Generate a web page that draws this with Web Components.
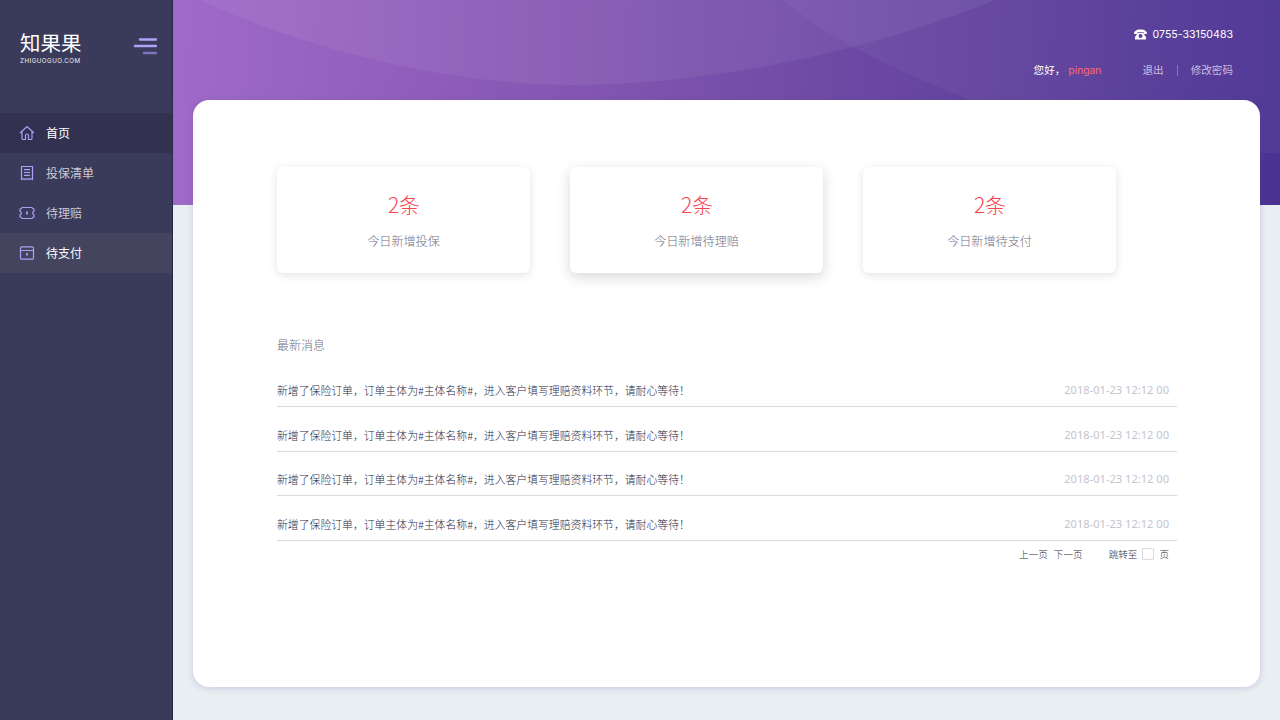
<!DOCTYPE html>
<html lang="zh">
<head>
<meta charset="utf-8">
<title>知果果</title>
<style>
html, body { margin: 0; height: 100%; background: #e9eef2; }
body { font-family: "Noto Sans CJK SC", "Inter", sans-serif; overflow: hidden; }
app-shell { height: 720px; }
</style>
</head>
<body>
<app-shell>
  <side-bar slot="side">
    <nav-item icon="home" active>首页</nav-item>
    <nav-item icon="list">投保清单</nav-item>
    <nav-item icon="ticket">待理赔</nav-item>
    <nav-item icon="box" hover>待支付</nav-item>
  </side-bar>
  <top-banner slot="top"></top-banner>
  <main-panel slot="panel">
    <stat-row>
      <stat-card value="2条">今日新增投保</stat-card>
      <stat-card value="2条" raised>今日新增待理赔</stat-card>
      <stat-card value="2条">今日新增待支付</stat-card>
    </stat-row>
    <message-list>
      <message-row>新增了保险订单，订单主体为#主体名称#，进入客户填写理赔资料环节，请耐心等待！</message-row>
      <message-row>新增了保险订单，订单主体为#主体名称#，进入客户填写理赔资料环节，请耐心等待！</message-row>
      <message-row>新增了保险订单，订单主体为#主体名称#，进入客户填写理赔资料环节，请耐心等待！</message-row>
      <message-row>新增了保险订单，订单主体为#主体名称#，进入客户填写理赔资料环节，请耐心等待！</message-row>
    </message-list>
    <pager-bar></pager-bar>
  </main-panel>
</app-shell>

<script>
const CJK = '"Noto Sans CJK SC", "Inter", sans-serif';

const ICONS = {
  home: '<path d="M1 8 8 1.500 15 8M3 6.500v6.700c0 .8.500 1.300 1.300 1.300h2.200V10.500c0-.8.700-1.500 1.500-1.500s1.500.7 1.500 1.500v4h2.200c.8 0 1.300-.5 1.300-1.300V6.500"/>',
  list: '<path d="M2.500 1.500h11v13l-1.400-.9-1.400.9-1.400-.9-1.300.9-1.400-.9-1.400.9-1.300-.9-1.400.9zM5 4.700h6M5 7.500h6M5 10.300h6"/>',
  ticket: '<path d="M3 2.500h10c.2 1 1 1.600 2 1.700v1.900c-.9.3-1.300 1.100-1.300 1.900s.4 1.600 1.300 1.900v1.900c-1 .1-1.800.7-2 1.700H3c-.2-1-1-1.600-2-1.700V9.900c.9-.3 1.300-1.100 1.300-1.900S1.900 6.400 1 6.100V4.200c1-.1 1.800-.7 2-1.700z"/><path d="M8 6.500v3" stroke-width="1.800"/>',
  box: '<path d="M2.800 1.800h10.400c.7 0 1.300.6 1.300 1.300v9.800c0 .7-.6 1.300-1.300 1.300H2.800c-.7 0-1.300-.6-1.300-1.300V3.100c0-.7.6-1.300 1.300-1.300zM1.500 5.500h13"/><path d="M8 8v2.500" stroke-width="1.800"/>'
};

class AppShell extends HTMLElement {
  constructor() {
    super();
    this.attachShadow({ mode: 'open' });
    this.shadowRoot.innerHTML = `
    <style>
      :host { display: flex; width: 1280px; background: #e9eef2; }
      .main { flex: 1; min-width: 0; display: flex; flex-direction: column; }
      .panel-wrap { margin: -105px 20px 0; position: relative; }
    </style>
    <slot name="side"></slot>
    <div class="main">
      <slot name="top"></slot>
      <div class="panel-wrap"><slot name="panel"></slot></div>
    </div>`;
  }
}

class SideBar extends HTMLElement {
  constructor() {
    super();
    this.attachShadow({ mode: 'open' });
    this.shadowRoot.innerHTML = `
    <style>
      :host { display: block; width: 173px; flex: none; background: #3a3a5a; box-shadow: inset -1px 0 0 #28284a; color: #fff; }
      .head { height: 113px; box-sizing: border-box; padding: 29px 16px 0 20px; display: flex; justify-content: space-between; align-items: flex-start; }
      .logo { display: flex; flex-direction: column; }
      .name { font: 400 20.500px/27px ${CJK}; width: 62px; white-space: nowrap; }
      .url { font: 400 6.200px/7px "Inter", sans-serif; letter-spacing: .5px; white-space: nowrap; margin-top: 1px; color: #f2f2f6; }
      svg { margin-top: 9px; display: block; }
    </style>
    <div class="head">
      <div class="logo"><span class="name">知果果</span><span class="url">ZHIGUOGUO.COM</span></div>
      <svg width="24" height="18" viewBox="0 0 24 18" stroke-width="2.400" stroke-linecap="round">
        <path d="M7 1.500h16" stroke="#b0a4f5"/><path d="M2 8h21" stroke="#b0a4f5"/><path d="M11 15h12" stroke="#7d74c0"/>
      </svg>
    </div>
    <slot></slot>`;
  }
}

class NavItem extends HTMLElement {
  constructor() {
    super();
    this.attachShadow({ mode: 'open' });
    const icon = ICONS[this.getAttribute('icon')];
    this.shadowRoot.innerHTML = `
    <style>
      :host { display: flex; align-items: center; height: 40px; padding-left: 19px; gap: 11px; margin-right: 1px; font: 400 12px/1 ${CJK}; color: #c9c9d6; }
      :host([active]) { background: #323250; color: #fff; }
      :host([hover]) { background: #44445f; color: #fff; }
      svg { width: 16px; height: 16px; fill: none; stroke: #aaa1f7; stroke-width: 1.200; flex: none; }
    </style>
    <svg viewBox="0 0 16 16">${icon}</svg><slot></slot>`;
  }
}

class TopBanner extends HTMLElement {
  constructor() {
    super();
    this.attachShadow({ mode: 'open' });
    this.shadowRoot.innerHTML = `
    <style>
      :host { display: block; height: 205px; position: relative; overflow: hidden; color: #fff;
        background: linear-gradient(92deg, #a06ac8 0%, #8557b2 35%, #64449f 70%, #4a3292 100%); }
      svg.waves { position: absolute; inset: 0; width: 100%; height: 100%; }
      .info { position: relative; padding: 27px 47px 0 0; display: flex; flex-direction: column; align-items: flex-end; font: 400 10.600px/16px ${CJK}; }
      .tel { display: flex; align-items: center; gap: 6px; height: 16px; font: 400 10.600px/16px "Inter", sans-serif; }
      .user { display: flex; align-items: center; margin-top: 19px; height: 16px; }
      .hi { margin-right: 3px; }
      .who { color: #ff6a6a; font-family: "Inter", sans-serif; font-size: 10.300px; margin-right: 41px; }
      .link { color: #c9bde2; }
      .sep { width: 1px; height: 11px; background: #8a78bb; margin: 0 13px; }
      .tel svg { width: 13px; height: 11px; fill: #fff; margin-top: -2px; }
    </style>
    <svg class="waves" viewBox="0 0 1107 205" preserveAspectRatio="none">
      <path d="M28 0C100 35 250 85 400 85 540 85 700 50 822 0z" fill="#fff" fill-opacity=".06"/>
      <path d="M610 0C650 35 720 70 795 99L912 153H1107V0z" fill="#fff" fill-opacity=".04"/>
    </svg>
    <div class="info">
      <div class="tel">
        <svg viewBox="0 0 13 11"><path d="M0 3.500C1.500 1 4 .5 6.500.5S11.500 1 13 3.500L12.800 5H10L9.500 3.200H3.500L3 5H.2z"/><path d="M3.800 4h5.400L12 8v2.500H1V8zM6.500 5a2 2 0 1 0 0 4 2 2 0 0 0 0-4z"/></svg>
        <span>0755-33150483</span>
      </div>
      <div class="user">
        <span class="hi">您好，</span><span class="who">pingan</span>
        <span class="link">退出</span><span class="sep"></span><span class="link">修改密码</span>
      </div>
    </div>`;
  }
}

class MainPanel extends HTMLElement {
  constructor() {
    super();
    this.attachShadow({ mode: 'open' });
    this.shadowRoot.innerHTML = `
    <style>
      :host { display: block; height: 587px; box-sizing: border-box; padding: 67px 83px 0 84px; background: #fff; border-radius: 16px;
        box-shadow: 0 1px 6px rgba(90, 80, 160, .24); }
    </style>
    <slot></slot>`;
  }
}

class StatRow extends HTMLElement {
  constructor() {
    super();
    this.attachShadow({ mode: 'open' });
    this.shadowRoot.innerHTML = `
    <style>:host { display: flex; gap: 40px; }</style><slot></slot>`;
  }
}

class StatCard extends HTMLElement {
  constructor() {
    super();
    this.attachShadow({ mode: 'open' });
    this.shadowRoot.innerHTML = `
    <style>
      :host { display: flex; flex-direction: column; align-items: center; width: 253px; height: 106px; box-sizing: border-box; padding-top: 22px; border-radius: 6px; background: #fff;
        box-shadow: 0 2px 8px rgba(60, 60, 90, .14); }
      :host([raised]) { box-shadow: 0 4px 13px rgba(60, 60, 70, .2); }
      .v { font: 300 21px/30px ${CJK}; color: #f9424f; padding-left: 1px; }
      .l { font: 300 12.100px/18px ${CJK}; color: #6f6f86; margin-top: 13px; }
    </style>
    <div class="v">${this.getAttribute('value')}</div>
    <div class="l"><slot></slot></div>`;
  }
}

class MessageList extends HTMLElement {
  constructor() {
    super();
    this.attachShadow({ mode: 'open' });
    this.shadowRoot.innerHTML = `
    <style>
      :host { display: block; margin-top: 62px; }
      h2 { margin: 0 0 7.500px; font: 300 12px/20px ${CJK}; color: #6f6f86; }
    </style>
    <h2>最新消息</h2>
    <slot></slot>`;
  }
}

class MessageRow extends HTMLElement {
  constructor() {
    super();
    this.attachShadow({ mode: 'open' });
    this.shadowRoot.innerHTML = `
    <style>
      :host { display: flex; justify-content: space-between; align-items: flex-end; height: 44.600px; box-sizing: border-box; padding: 0 8px 8px 0; border-bottom: 1px solid #d9d9df; }
      .t { font: 300 10.850px/16px ${CJK}; color: #2a2a46; }
      .d { font: 400 11.100px/16px "Noto Sans", sans-serif; color: #c4c4cf; }
    </style>
    <span class="t"><slot></slot></span><span class="d">2018-01-23 12:12 00</span>`;
  }
}

class PagerBar extends HTMLElement {
  constructor() {
    super();
    this.attachShadow({ mode: 'open' });
    this.shadowRoot.innerHTML = `
    <style>
      :host { display: flex; justify-content: flex-end; align-items: center; height: 26px; padding-right: 8px; font: 300 9.600px/14px ${CJK}; color: #2a2a46; }
      .next { margin-left: 6px; margin-right: 26px; }
      .box { width: 10px; height: 10px; border: 1px solid #d9d9df; border-radius: 1px; margin: 0 5px; }
    </style>
    <span>上一页</span><span class="next">下一页</span><span>跳转至</span><span class="box"></span><span>页</span>`;
  }
}

customElements.define('app-shell', AppShell);
customElements.define('side-bar', SideBar);
customElements.define('nav-item', NavItem);
customElements.define('top-banner', TopBanner);
customElements.define('main-panel', MainPanel);
customElements.define('stat-row', StatRow);
customElements.define('stat-card', StatCard);
customElements.define('message-list', MessageList);
customElements.define('message-row', MessageRow);
customElements.define('pager-bar', PagerBar);
</script>
</body>
</html>
